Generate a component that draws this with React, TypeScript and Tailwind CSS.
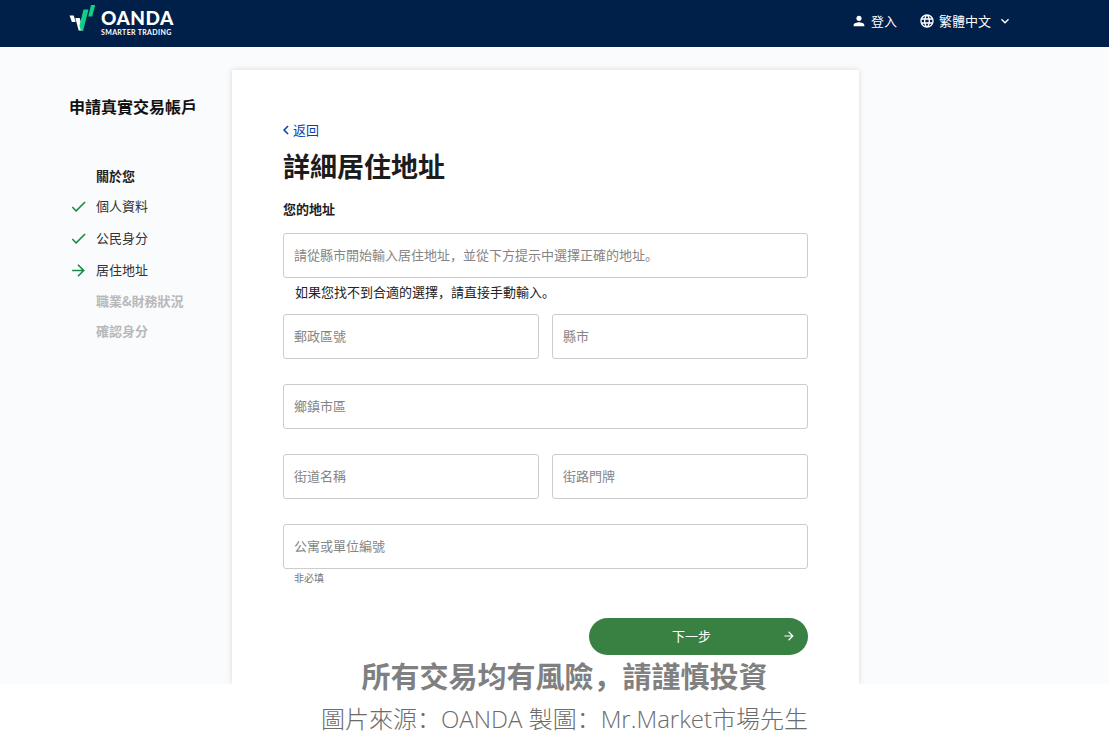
import React from 'react';
import { MdPerson, MdLanguage, MdExpandMore, MdChevronLeft, MdCheck, MdArrowForward } from 'react-icons/md';

function Logo() {
  return (
    <a href="#" className="flex items-start">
      <svg width="26" height="29" viewBox="0 0 26 29" className="mt-1 shrink-0" aria-hidden="true">
        <path d="M0.5 11.5h4.2l2 6.5H2.9z" fill="#fff" />
        <path d="M6.3 14h4.4l3.5 12.5H9.7z" fill="#fff" />
        <path d="M14.5 5.5h5L14.2 26.5h-2.4l-1.3-5z" fill="#0fd08a" />
        <path d="M22 1h4.2l-3 11.5h-4z" fill="#0fd08a" />
      </svg>
      <span className="mt-2 ml-1.5 flex flex-col font-[Lato,sans-serif] text-white">
        <span className="text-[19px] leading-5 font-black tracking-wide">OANDA</span>
        <span className="text-[7px] leading-2 font-bold tracking-wider">SMARTER TRADING</span>
      </span>
    </a>
  );
}

function Header() {
  return (
    <header className="flex h-[47px] items-start bg-[#00204a] pr-24 pl-[69px]">
      <Logo />
      <nav className="ml-auto flex h-[42px] items-center gap-[22px] text-[13px] text-white">
        <a href="#" className="flex items-center gap-1">
          <MdPerson size={16} />
          登入
        </a>
        <button type="button" className="flex items-center gap-1">
          <MdLanguage size={16} />
          繁體中文
          <MdExpandMore size={16} className="ml-0.5" />
        </button>
      </nav>
    </header>
  );
}

const doneSteps = ['個人資料', '公民身分'];
const pendingSteps = ['職業&財務狀況', '確認身分'];

function Sidebar() {
  return (
    <aside className="w-[163px] shrink-0 pt-6">
      <h2 className="text-base leading-6 font-bold text-[#111]">申請真實交易帳戶</h2>
      <h3 className="mt-12 pl-[27px] text-[13px] leading-5 font-bold text-[#222]">關於您</h3>
      <ul className="mt-1 text-[13px] leading-8 text-[#333]">
        {doneSteps.map((step) => (
          <li key={step} className="flex items-center gap-2">
            <MdCheck size={19} className="text-[#1b8a4b]" />
            {step}
          </li>
        ))}
        <li className="flex items-center gap-2">
          <MdArrowForward size={19} className="text-[#1b8a4b]" />
          居住地址
        </li>
      </ul>
      <ul className="pl-[27px] text-[13px] leading-[30px] font-bold text-[#b9b9b9]">
        {pendingSteps.map((step) => (
          <li key={step}>{step}</li>
        ))}
      </ul>
    </aside>
  );
}

function Field({ label }: { label: string }) {
  return (
    <input
      type="text"
      aria-label={label}
      placeholder={label}
      className="block h-[45px] w-full min-w-0 rounded-[3px] border border-[#cccccc] bg-white px-2.5 pb-0.5 text-[13px] text-[#222] placeholder:text-[#858585]"
    />
  );
}

function AddressForm() {
  return (
    <form className="px-[51px] pt-[50px] pb-[29px]">
      <a href="#" className="flex items-center text-[13px] leading-5 text-[#0a3fae]">
        <MdChevronLeft size={18} className="-mr-0.5 -ml-1.5" />
        返回
      </a>
      <h1 className="mt-1.5 text-[27px] leading-10 font-bold text-[#1c1c1c]">詳細居住地址</h1>
      <h2 className="mt-[13px] mb-3.5 text-[13px] leading-5 font-bold text-[#222]">您的地址</h2>
      <Field label="請從縣市開始輸入居住地址，並從下方提示中選擇正確的地址。" />
      <p className="pt-1 pb-3 pl-3 text-[13px] leading-5 text-[#222]">如果您找不到合適的選擇，請直接手動輸入。</p>
      <div className="grid grid-cols-2 gap-x-[13px] gap-y-[25px]">
        <Field label="郵政區號" />
        <Field label="縣市" />
        <div className="col-span-2">
          <Field label="鄉鎮市區" />
        </div>
        <Field label="街道名稱" />
        <Field label="街路門牌" />
        <div className="col-span-2">
          <Field label="公寓或單位編號" />
        </div>
      </div>
      <p className="pl-[11px] text-[10px] leading-[18px] text-[#777]">非必填</p>
      <button
        type="button"
        className="mt-[31px] ml-auto flex h-[37px] w-[219px] items-center rounded-full bg-[#398043] px-3 pb-0.5 text-[13px] text-white"
      >
        <span className="flex-1 text-center">下一步</span>
        <MdArrowForward size={14} />
      </button>
    </form>
  );
}

export default function App() {
  return (
    <div className="min-h-screen bg-white font-['Noto_Sans_CJK_SC',sans-serif]">
      <Header />
      <div className="flex overflow-hidden bg-[#fafbfd] px-[69px] pt-[23px]">
        <Sidebar />
        <main className="max-w-[627px] flex-1 bg-white shadow-[0_0_6px_rgba(0,0,0,0.14)]">
          <AddressForm />
        </main>
      </div>
      <footer className="relative -mt-[29px] flex flex-col items-center pl-5 text-[#808080]">
        <p className="text-[29px] leading-10 font-bold">所有交易均有風險，請謹慎投資</p>
        <p className="font-['Open_Sans','Noto_Sans_CJK_SC',sans-serif] text-[24px] leading-[48px] font-light text-[#6c6c6c]">
          圖片來源：OANDA 製圖：Mr.Market市場先生
        </p>
      </footer>
    </div>
  );
}
